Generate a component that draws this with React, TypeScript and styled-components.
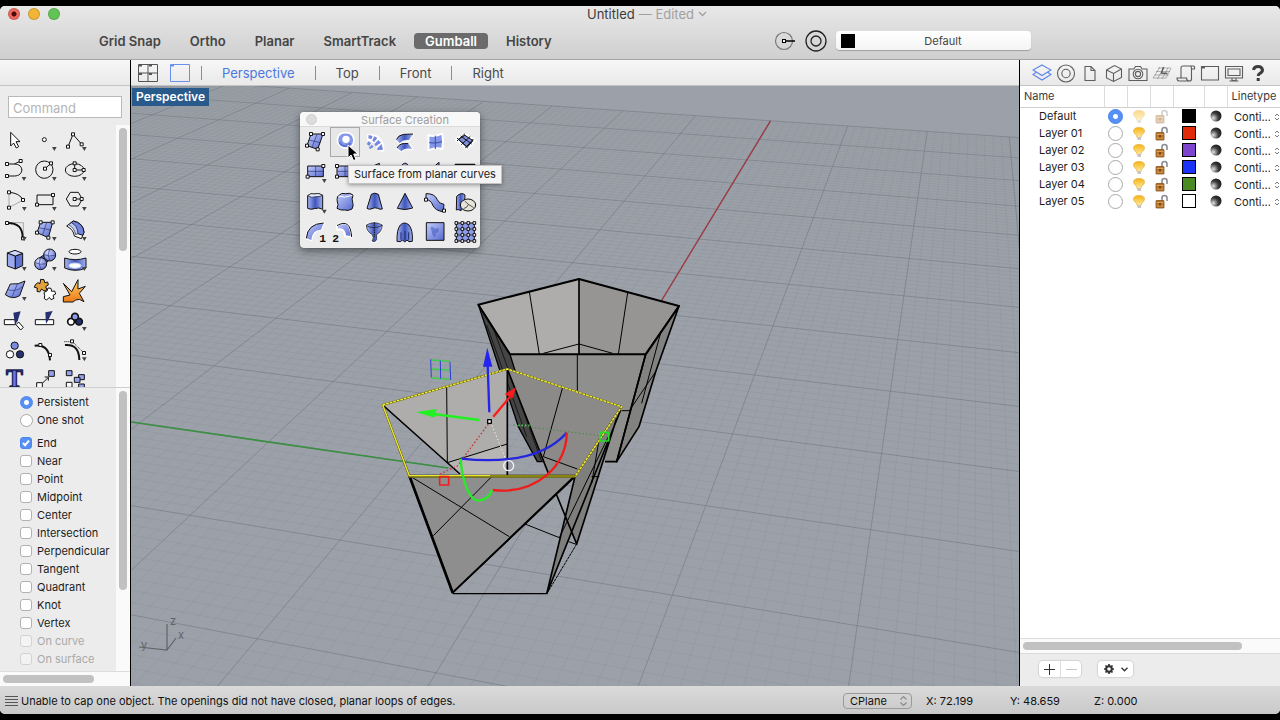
import React from "react";
import styled, { createGlobalStyle, css } from "styled-components";

const GlobalStyle = createGlobalStyle`
  *, *::before, *::after { box-sizing: border-box; }
  body { margin: 0; background: #000; }
  button, input, select { font: inherit; color: inherit; margin: 0; }
`;

/* ---------- window frame ---------- */

const Screen = styled.div`
  height: 100vh;
  padding: 6px 0;
  background: #000;
  font-family: Inter, "Liberation Sans", sans-serif;
  font-size: 11px;
  color: #1c1c1c;
`;

const Window = styled.div`
  height: 100%;
  display: flex;
  flex-direction: column;
  overflow: hidden;
  border-radius: 5px;
  background: #ececec;
`;

const Chrome = styled.header`
  flex: none;
  background: linear-gradient(#e8e8e8, #cfcfcf);
  border-bottom: 1px solid #a5a5a5;
`;

const TitleBar = styled.div`
  display: grid;
  grid-template-columns: 1fr auto 1fr;
  align-items: center;
  height: 16px;
  padding: 0 8px;
  font-size: 13px;
`;

const Lights = styled.div`
  display: flex;
  gap: 8px;
`;

const Light = styled.button<{ $color: string; $dot?: boolean }>`
  width: 12px;
  height: 12px;
  padding: 0;
  border: 1px solid rgba(0, 0, 0, 0.15);
  border-radius: 50%;
  background: ${(p) =>
    p.$dot ? `radial-gradient(circle, #4a0a08 0 2px, ${p.$color} 3px)` : p.$color};
`;

const Title = styled.h1`
  display: flex;
  align-items: center;
  gap: 4px;
  margin: 0 0 0 14px;
  font-size: 13px;
  line-height: 16px;
  font-weight: 400;
  color: #3c3c3c;
  span { color: #a0a0a0; }
`;

const Toolbar = styled.div`
  display: flex;
  align-items: center;
  height: 37px;
  padding: 0 249px 0 88px;
  gap: 7px;
`;

const Toggle = styled.button<{ $on?: boolean }>`
  height: 16px;
  padding: 0 11px;
  border: 0;
  border-radius: 4px;
  background: ${(p) => (p.$on ? "#6b6b6b" : "transparent")};
  color: ${(p) => (p.$on ? "#fff" : "#454545")};
  font-size: 13px;
  line-height: 16px;
  font-weight: 600;
`;

const LayerTools = styled.div`
  display: flex;
  align-items: center;
  gap: 8px;
  margin-left: auto;
`;

const PlainButton = styled.button`
  display: grid;
  place-items: center;
  width: 24px;
  height: 24px;
  padding: 0;
  border: 0;
  background: none;
  color: #4a4a4a;
`;

const LayerPopup = styled.button`
  display: flex;
  align-items: center;
  width: 195px;
  height: 19px;
  padding: 0 0 0 5px;
  border: 0;
  border-radius: 4px;
  background: linear-gradient(#fff, #f4f4f4);
  box-shadow: 0 1px 1px rgba(0, 0, 0, 0.25);
  color: #454545;
  span { flex: 1; }
`;

const Swatch = styled.i<{ $color: string }>`
  display: block;
  width: 14px;
  height: 14px;
  border: 1px solid #000;
  background: ${(p) => p.$color};
`;

const Workspace = styled.div`
  flex: 1;
  min-height: 0;
  display: flex;
`;

const stripStyle = css`
  flex: none;
  display: flex;
  align-items: center;
  height: 26px;
  background: linear-gradient(#f7f7f7, #e9e9e9);
  border-bottom: 1px solid #c4c4c4;
`;

/* ---------- left column ---------- */

const Sidebar = styled.aside`
  flex: none;
  width: 131px;
  display: flex;
  flex-direction: column;
  border-right: 1px solid #000;
`;

const SidebarStrip = styled.div`
  ${stripStyle}
`;

const CommandRow = styled.div`
  padding: 10px 8px 7px;
`;

const CommandInput = styled.input`
  display: block;
  width: 100%;
  height: 22px;
  padding: 2px 4px 0;
  border: 1px solid #b9b9b9;
  border-radius: 0;
  background: #fff;
  font-size: 13px;
  &::placeholder { color: #b4b4b4; opacity: 1; }
`;

const ScrollArea = styled.section<{ $grow?: boolean }>`
  display: flex;
  min-height: 0;
  overflow: hidden;
  ${(p) => (p.$grow ? "flex: 1;" : "flex: 0 0 263px; border-bottom: 1px solid #cfcfcf;")}
`;

const ScrollBody = styled.div`
  flex: 1;
  min-width: 0;
  overflow: hidden;
`;

const VTrack = styled.div`
  flex: none;
  width: 14px;
  padding: 3px;
  background: #fafafa;
`;

const VThumb = styled.div<{ $size: string }>`
  width: 8px;
  height: ${(p) => p.$size};
  border-radius: 4px;
  background: #c1c1c1;
`;

const HTrack = styled.div`
  flex: none;
  padding: 3px 3px;
  height: 15px;
  background: #fafafa;
  border-top: 1px solid #dcdcdc;
`;

const HThumb = styled.div<{ $size: string }>`
  width: ${(p) => p.$size};
  height: 8px;
  border-radius: 4px;
  background: #c1c1c1;
`;

const ToolGrid = styled.div`
  display: grid;
  grid-template-columns: repeat(3, 30px);
  grid-auto-rows: 30px;
  padding-top: 1px;
`;

const ToolButton = styled.button<{ $active?: boolean }>`
  display: block;
  padding: 0;
  border: 0;
  background: none;
  ${(p) => p.$active && "box-shadow: inset 0 0 0 1px #a9a9a9; background: #e6e6e6;"}
  svg { display: block; }
`;

const Options = styled.div`
  padding: 5px 0 0 20px;
`;

const OptionGroup = styled.div`
  margin-bottom: 5px;
`;

const Option = styled.label<{ $off?: boolean }>`
  display: flex;
  align-items: center;
  gap: 5px;
  height: 18px;
  white-space: nowrap;
  color: ${(p) => (p.$off ? "#a9a9a9" : "#1c1c1c")};
`;

const Radio = styled.input.attrs({ type: "radio" })<{ $large?: boolean }>`
  appearance: none;
  flex: none;
  width: ${(p) => (p.$large ? "15px" : "13px")};
  height: ${(p) => (p.$large ? "15px" : "13px")};
  border: 1px solid #a9a9a9;
  border-radius: 50%;
  background: #fff;
  &:checked {
    border-color: #4a86ee;
    background: radial-gradient(circle, #fff 0 2px, #568ff5 3px);
  }
`;

const OptionRadio = styled(Radio)`
  margin-right: -1px;
`;

const Check = styled.input.attrs({ type: "checkbox" })`
  appearance: none;
  flex: none;
  display: grid;
  place-items: center;
  width: 12px;
  height: 12px;
  border: 1px solid #b2b2b2;
  border-radius: 3px;
  background: #fff;
  &:disabled { border-color: #d2d2d2; background: #f3f3f3; }
  &:checked { border-color: #4a86ee; background: #568ff5; }
  &:checked::after {
    content: "";
    width: 4px;
    height: 7px;
    margin-bottom: 2px;
    border: solid #fff;
    border-width: 0 2px 2px 0;
    transform: rotate(42deg);
  }
`;

/* ---------- centre ---------- */

const Center = styled.main`
  flex: 1;
  min-width: 0;
  display: flex;
  flex-direction: column;
`;

const ViewTabs = styled.nav`
  ${stripStyle}
  padding-left: 4px;
`;

const ViewIcon = styled(PlainButton)`
  width: 26px;
  margin-right: 6px;
`;

const TabList = styled.div`
  display: flex;
  padding-left: 2px;
`;

const Tab = styled.button<{ $on?: boolean }>`
  height: 14px;
  padding: 0 20px;
  border: 0;
  border-left: 1px solid #8d8d8d;
  background: none;
  font-size: 13px;
  line-height: 14px;
  color: ${(p) => (p.$on ? "#4a78e0" : "#4b4b4b")};
`;

const Viewport = styled.div`
  position: relative;
  flex: 1;
  min-height: 0;
  overflow: hidden;
  background: #9ca1a9;
`;

const Scene = styled.svg`
  display: block;
  width: 100%;
  height: 100%;
`;

const ViewLabel = styled.button`
  position: absolute;
  left: 1px;
  top: 2px;
  height: 18px;
  padding: 0 4px;
  border: 0;
  background: #285a8c;
  color: #fff;
  font-size: 12px;
  line-height: 18px;
  font-weight: 600;
`;

const Palette = styled.section`
  position: absolute;
  left: 169px;
  top: 26px;
  width: 180px;
  border-radius: 4px;
  background: #ececec;
  box-shadow: 0 3px 9px rgba(0, 0, 0, 0.45), 0 0 1px rgba(0, 0, 0, 0.5);
`;

const PaletteTitle = styled.header`
  position: relative;
  height: 15px;
  padding-left: 30px;
  border-bottom: 1px solid #dadada;
  border-radius: 4px 4px 0 0;
  background: #f8f8f8;
  color: #9c9c9c;
  text-align: center;
  line-height: 17px;
`;

const PaletteClose = styled.button`
  position: absolute;
  left: 6px;
  top: 2px;
  width: 11px;
  height: 11px;
  padding: 0;
  border: 1px solid #cfcfcf;
  border-radius: 50%;
  background: #dcdcdc;
`;

const PaletteGrid = styled.div`
  display: grid;
  grid-template-columns: repeat(6, 30px);
  grid-auto-rows: 30px;
  padding-bottom: 1px;
`;

const Tooltip = styled.div`
  position: absolute;
  left: 217px;
  top: 79px;
  padding: 0 5px;
  border: 1px solid #c2c2c2;
  background: #f4f4f4;
  box-shadow: 0 1px 4px rgba(0, 0, 0, 0.4);
  line-height: 17px;
  white-space: nowrap;
`;

const Pointer = styled.svg`
  position: absolute;
  left: 216px;
  top: 58px;
`;

/* ---------- right column ---------- */

const Inspector = styled.aside`
  flex: none;
  width: 261px;
  display: flex;
  flex-direction: column;
  overflow: hidden;
  border-left: 1px solid #000;
  background: #fff;
`;

const PanelIcons = styled.div`
  ${stripStyle}
  padding-left: 10px;
`;

const PanelIcon = styled(PlainButton)<{ $on?: boolean }>`
  color: ${(p) => (p.$on ? "#5c86ea" : "#5d5d5d")};
`;

const LayerTable = styled.table`
  width: 100%;
  table-layout: fixed;
  border-collapse: collapse;
  th {
    height: 21px;
    padding: 0 0 0 4px;
    border-right: 1px solid #dcdcdc;
    border-bottom: 1px solid #d0d0d0;
    font-weight: 400;
    text-align: left;
    color: #3a3a3a;
  }
  th:last-child { border-right: 0; }
  td {
    height: 17px;
    padding: 0;
    line-height: 15px;
    white-space: nowrap;
  }
  td:first-child { padding-left: 19px; }
`;

const Cell = styled.div`
  display: flex;
  justify-content: center;
  align-items: center;
  height: 17px;
`;

const LineCell = styled(Cell)`
  justify-content: flex-start;
  padding: 2px 0 0 7px;
  gap: 4px;
`;

const LineSelect = styled.select`
  appearance: none;
  width: 36px;
  padding: 0;
  border: 0;
  background: none;
  line-height: 15px;
`;

const Filler = styled.div`
  flex: 1;
`;

const PanelFooter = styled.footer`
  flex: none;
  display: flex;
  align-items: flex-start;
  gap: 17px;
  height: 33px;
  padding: 7px 19px;
  background: #ececec;
  border-top: 1px solid #dadada;
`;

const Segments = styled.div`
  display: flex;
  height: 16px;
  border-radius: 4px;
  background: #fff;
  box-shadow: 0 0 1px 1px #d4d4d4;
`;

const Segment = styled.button<{ $dim?: boolean; $wide?: boolean }>`
  display: flex;
  align-items: center;
  justify-content: center;
  gap: 6px;
  width: ${(p) => (p.$wide ? "35px" : "21px")};
  padding: 0;
  border: 0;
  background: none;
  color: ${(p) => (p.$dim ? "#c6c6c6" : "#333")};
  & + & { border-left: 1px solid #dcdcdc; }
`;

/* ---------- status bar ---------- */

const StatusBar = styled.footer`
  flex: none;
  display: flex;
  align-items: center;
  height: 28px;
  padding: 2px 0 0 5px;
  gap: 3px;
  background: linear-gradient(#dadada, #c9c9c9);
  color: #111;
`;

const Coords = styled.div`
  display: flex;
  align-items: center;
  margin-left: auto;
`;

const PlaneBox = styled.div`
  position: relative;
  display: flex;
  align-items: center;
  margin-right: 14px;
  svg { position: absolute; right: 4px; }
`;

const PlaneSelect = styled.select`
  appearance: none;
  width: 69px;
  height: 16px;
  padding: 0 6px;
  border: 1px solid #9a9a9a;
  border-radius: 4px;
  background: transparent;
  line-height: 14px;
`;

const Coord = styled.output<{ $last?: boolean }>`
  width: ${(p) => (p.$last ? "186px" : "84px")};
`;

/* ---------- shared drawing parts ---------- */

const K = "#111";

const Nodes = ({ at, s = 9 }: { at: number[][]; s?: number }) => (
  <>
    {at.map(([x, y], i) => (
      <rect key={i} x={x - s / 2} y={y - s / 2} width={s} height={s} fill="#fff" stroke={K} strokeWidth={3} />
    ))}
  </>
);

const Flag = ({ x, y }: { x: number; y: number }) => (
  <path d={`M${x - 7} ${y - 6}h14l-7 12z`} fill="#444" stroke="none" />
);

const UpDown = ({ color = "#555" }: { color?: string }) => (
  <svg width="9" height="12" viewBox="0 0 9 12" fill="none" stroke={color} strokeWidth="1.2" aria-hidden>
    <path d="M1.500 4.500l3-3 3 3M1.500 7.500l3 3 3-3" />
  </svg>
);

const Gradients = () => (
  <svg width="0" height="0" style={{ position: "absolute" }} aria-hidden>
    <defs>
      <linearGradient id="blue" x1="0" y1="0" x2="1" y2="1">
        <stop offset="0" stopColor="#c3cdfb" />
        <stop offset="1" stopColor="#5568cf" />
      </linearGradient>
      <linearGradient id="steel" x1="0" y1="0" x2="1" y2="0">
        <stop offset="0" stopColor="#a9b6f2" />
        <stop offset="0.5" stopColor="#3e55bb" />
        <stop offset="1" stopColor="#a4b1ee" />
      </linearGradient>
      <radialGradient id="ball" cx="0.35" cy="0.3" r="0.8">
        <stop offset="0" stopColor="#d4dbff" />
        <stop offset="1" stopColor="#5769c8" />
      </radialGradient>
      <linearGradient id="fire" x1="0" y1="0" x2="0" y2="1">
        <stop offset="0" stopColor="#fbd060" />
        <stop offset="1" stopColor="#ee7b1c" />
      </linearGradient>
      <linearGradient id="bulb" x1="0" y1="0" x2="0" y2="1">
        <stop offset="0" stopColor="#f9b414" />
        <stop offset="1" stopColor="#fbe9a0" />
      </linearGradient>
      <radialGradient id="material" cx="0.25" cy="0.7" r="0.8">
        <stop offset="0" stopColor="#e2e2e2" />
        <stop offset="0.6" stopColor="#3a3a3a" />
        <stop offset="1" stopColor="#1c1c1c" />
      </radialGradient>
    </defs>
  </svg>
);

/* Icons of both tool palettes are drawn on shared sheets, 90 units per cell. */

const mainTools: [string, React.ReactNode][] = [
  ["Select", <path d="M32 22v41l9-9 8 15 7-4-8-15h12z" fill="#fff" stroke={K} />],
  ["Point", <><circle cx="133" cy="44" r="6" fill="#fff" /><Flag x={163} y={72} /></>],
  ["Polyline", <><path d="M204 65l15-37 26 30" /><Nodes at={[[204, 65], [219, 28], [245, 58]]} /><Flag x={253} y={72} /></>],
  ["Arc", <><path d="M21 117h22c30 0 30 36 0 36H21M43 117l19-9" /><Nodes at={[[21, 117], [21, 153], [62, 108]]} /><Flag x={72} y={162} /></>],
  ["Circle", <><circle cx="133" cy="134" r="26" /><path d="M135 131l18-16" /><Nodes at={[[135, 131], [153, 115]]} /><Flag x={163} y={162} /></>],
  ["Ellipse", <><ellipse cx="224" cy="135" rx="28" ry="19" /><path d="M224 115v20h27" /><Nodes at={[[224, 115], [224, 135], [251, 135]]} /><Flag x={253} y={162} /></>],
  ["Sector", <><path d="M27 202q32 2 42 23" /><path d="M27 202v46l42-23" stroke="#888" strokeWidth="2" /><Nodes at={[[27, 202], [27, 248], [69, 225]]} /><Flag x={73} y={252} /></>],
  ["Rectangle", <><path d="M111 210h48v29h-48z" /><Nodes at={[[159, 210], [111, 239]]} /><Flag x={163} y={252} /></>],
  ["Polygon", <><path d="M199 222l12-20h24l12 20-12 21h-24z" /><path d="M224 222h21" /><Nodes at={[[224, 222], [245, 222]]} /><Flag x={253} y={252} /></>],
  ["Fillet", <><path d="M21 293h49v48" stroke="#888" strokeWidth="2" /><path d="M21 294c34 0 47 14 47 46" strokeWidth="6" /><Nodes at={[[21, 294], [69, 340]]} /><Flag x={73} y={342} /></>],
  ["Surface", <><path d="M122 292h36l-13 46-34-15z" fill="url(#blue)" /><path d="M140 293l-12 36M116 308l36 7" stroke="#27306f" strokeWidth="2" /><Nodes at={[[122, 292], [158, 292], [145, 338], [111, 323]]} /><Flag x={163} y={342} /></>],
  ["Sweep", <><path d="M200 303l20-15q30 6 32 34l-8 19-21-8q-2-19-23-30z" fill="#fff" /><path d="M212 294l8-6q30 6 32 34l-4 9-20-7q-2-20-16-30z" fill="#6f83df" /><path d="M206 299l8-6q18 8 20 33l-7 3q-4-20-21-30z" fill="#c3cdfb" strokeWidth="2" /><Flag x={253} y={342} /></>],
  ["Box", <><path d="M22 384l24 9v39l-24-9z" fill="#9aa8ee" /><path d="M46 393l22-8v37l-22 10z" fill="#5f72cf" /><path d="M22 384l23-8 23 9-22 8z" fill="#cdd6fd" /><Flag x={73} y={432} /></>],
  ["Spheres", <><path d="M130 391l14 18-10 8-16-18z" fill="#5769c8" /><circle cx="149" cy="390" r="18" fill="url(#ball)" /><circle cx="122" cy="416" r="18" fill="url(#ball)" /><path d="M132 389q14 7 34 2M149 373q-9 16 0 34M105 413q16 8 34 3M121 399q-8 16 2 34" strokeWidth="2" stroke="#2a3785" /><Flag x={163} y={432} /></>],
  ["Tube", <><ellipse cx="225" cy="380" rx="18" ry="7" fill="#fff" /><path d="M194 399q31 10 64 0v30q-32 14-64 0z" fill="url(#steel)" /><ellipse cx="225" cy="422" rx="18" ry="8" fill="#fff" stroke="#c4cefa" /><Flag x={253} y={432} /></>],
  ["Patch", <><path d="M31 477q25 3 44-9l-16 44q-22 13-43-3z" fill="url(#blue)" /><path d="M52 477l-16 39M23 494q26 8 44-9" stroke="#2a3785" strokeWidth="2" /><Flag x={73} y={522} /></>],
  ["Join", <><path d="M106 479l8-6 6 3 2-13 10 1 2 9 9-2 2 9-8 5 4 9-9 4-7-6-6 9-8-2 1-10-9-2z" fill="#e2a13a" /><path d="M132 502l9-4 3-9 9 1 2 9 9-1 3 9-8 4 3 9-9 4-5-7-8 8-7-4 1-9z" fill="#fff" /></>],
  ["Explode", <path d="M190 475l25 25 19-36v28l22-8-18 21 14 25q-14-11-26-5l-6 6h-30v-16l20-5z" fill="url(#fire)" />],
  ["Trim", <><path d="M13 584h33v15H13z" fill="#fff" /><path d="M40 563l22-4-9 29-8 10z" fill="#27306f" stroke="none" /><path d="M48 599l8-8 14 16-8 8z" fill="#fff" /></>],
  ["Split", <><path d="M106 584h55v15h-55z" fill="#fff" /><path d="M136 562l22-4-13 27-7 12z" fill="#27306f" stroke="none" /></>],
  ["Boolean", <><circle cx="213" cy="590" r="10" fill="#fff" strokeWidth="5" /><circle cx="237" cy="590" r="10" fill="#27306f" strokeWidth="5" /><circle cx="225" cy="575" r="10" fill="#8d9bea" strokeWidth="5" /><Flag x={253} y={612} /></>],
  ["Group", <><circle cx="44" cy="662" r="11" fill="#7b8be2" /><circle cx="30" cy="688" r="11" fill="#fff" /><circle cx="60" cy="688" r="11" fill="#27306f" /></>],
  ["Edit points", <><path d="M104 662q42-6 46 44" strokeWidth="6" /><Nodes at={[[121, 660], [150, 690]]} /></>],
  ["Control points", <><path d="M195 660q42-4 43 45" strokeWidth="6" /><path d="M193 650h24l36 35" strokeDasharray="3 3" /><Nodes at={[[216, 649], [252, 684]]} /><Flag x={253} y={703} /></>],
  ["Text", <text x="18" y="787" fontFamily="Liberation Serif" fontWeight="700" fontSize="76" fill="#6a7dde" stroke="#1c2455" strokeWidth="4">T</text>],
  ["Move", <><path d="M128 774l16-16M134 756h11v11" /><rect x="146" y="737" width="17" height="17" fill="#95a3ef" /><rect x="110" y="773" width="17" height="17" fill="#fff" /></>],
  ["Array", <><rect x="199" y="737" width="17" height="15" fill="#95a3ef" /><rect x="236" y="749" width="17" height="15" fill="#95a3ef" /><rect x="223" y="757" width="17" height="15" fill="#95a3ef" /><rect x="199" y="772" width="17" height="15" fill="#fff" /><rect x="236" y="777" width="17" height="15" fill="#95a3ef" /></>],
];

const gridNodes: number[][] = [];
for (let i = 0; i < 4; i++) for (let j = 0; j < 4; j++) gridNodes.push([484 + i * 18, 354 + j * 18]);

const REVOLVE = "M214 360q24-14 48 0-2 22-17 28v16q-5 10-14 4 8-9 0-20-17-8-17-28z";

const surfaceTools: [string, React.ReactNode][] = [
  ["Surface from corner points", <><path d="M48 87h36l-16 46-32-11z" fill="url(#blue)" /><path d="M66 88l-15 39M42 105l34 8" stroke="#27306f" strokeWidth="2" /><Nodes at={[[48, 87], [84, 87], [68, 133], [36, 122]]} /></>],
  ["Surface from planar curves", <><path d="M151 83c32 0 31 34 13 44-19 8-40-6-36-28 3-11 12-16 23-16z" fill="#8497e8" stroke="#fff" strokeWidth="5" /><path d="M134 112c4 14 26 14 32 2" stroke="#5c72d2" strokeWidth="6" /><circle cx="153" cy="103" r="11" fill="#fff" stroke="none" /></>],
  ["Loft", <><path d="M220 92q44-4 44 44l-14-2q0-26-30-30z" fill="#fff" stroke="#fff" strokeWidth="8" /><path d="M221 90l12 3-4 10-9-3zM238 94l9 5-10 13-5-6zM250 105l8 8-16 11-4-7zM260 117l4 17-17 2v-7zM221 109l7 5-5 9-8-6zM231 119l5 6-10 7-5-4z" fill="#7389de" stroke="none" /></>],
  ["Sweep one rail", <><path d="M304 104l18-16 32-1-12 18q-20-1-28 10zM306 130q8-18 34-14l12 16q-24-5-32 7z" fill="#7f92e6" stroke="#fff" strokeWidth="6" /><path d="M304 104q6-14 22-16l28-1-12 18q-20-1-28 10z" fill="url(#steel)" stroke="none" /><path d="M306 130q8-18 34-14l12 16q-24-5-32 7z" fill="url(#steel)" stroke="none" /><path d="M304 104q6-14 22-16l28-1M306 129q8-17 34-13" strokeWidth="3" /></>],
  ["Patch", <><path d="M400 90q18 7 42-4 4 22 0 46-20-6-42 4 2-20 0-46z" fill="#8497e8" stroke="#fff" strokeWidth="6" /><path d="M421 92v40M402 113q20 4 39-3" stroke="#3b4fa8" strokeWidth="3" /></>],
  ["Network surface", <><path d="M486 104l24-15 26 17-19 22z" stroke="#fff" strokeWidth="12" fill="#fff" /><path d="M490 103l20-12 24 16-17 19z" fill="#7f90de" /><path d="M486 99l32 30M497 93l33 24M486 108l24-22M499 119l27-25M511 129l24-27" strokeWidth="3" /></>],
  ["Rectangular plane", <><path d="M38 183h47v32H38z" fill="url(#blue)" /><path d="M62 184v30M39 199h45" stroke="#27306f" strokeWidth="2" /><Nodes at={[[85, 183], [38, 215]]} /><Flag x={88} y={228} /></>],
  ["Plane by three points", <><path d="M126 183h46v32h-46z" fill="url(#blue)" /><path d="M150 184v30M127 199h45" stroke="#27306f" strokeWidth="2" /><Nodes at={[[126, 183], [126, 215]]} /></>],
  ["Vertical plane", <path d="M232 184l21-9v30h-21z" fill="url(#blue)" />],
  ["Cutting plane", <path d="M320 185q2-12 14-10l9 10z" fill="url(#blue)" />],
  ["Plane through points", <path d="M418 184l14-12v20z" fill="url(#blue)" />],
  ["Picture frame", <path d="M481 178h58v30h-58z" fill="url(#blue)" strokeWidth="4" />],
  ["Extrude curve", <><path d="M38 272v38q9 5 20 1 14-5 25 2v-42q-12-9-25-4-10-4-20 5z" fill="url(#steel)" /><path d="M38 272q10-9 20-5 13-5 25 4-10 5-22 4-10 5-23-3z" fill="#e6ebff" strokeWidth="2" /><Flag x={88} y={320} /></>],
  ["Extrude along curve", <><path d="M128 274q12-13 24-8 13-4 22 4-5 14-1 22 4 10-2 20-12 7-22 3-12 2-23-5 6-13 1-19-2-8 1-17z" fill="url(#blue)" /><path d="M130 273q18 8 42-2" stroke="#fff" strokeWidth="3" /></>],
  ["Extrude tapered", <><path d="M229 268q10-7 21 0l12 44q-8 2-14-2-9-4-17 1-8 4-15-1z" fill="url(#steel)" /></>],
  ["Extrude to point", <path d="M330 265l23 44q-22 9-46 1z" fill="url(#steel)" />],
  ["Ribbon", <><path d="M393 266q26-1 34 18 4 12 20 14l-2 22q-24-2-32-20-5-15-20-16z" fill="url(#blue)" /><Nodes at={[[393, 284], [447, 317]]} /></>],
  ["Fillet surface", <><path d="M485 274q14-14 25-4l-2 34-10 13q-10-6-14-2z" fill="url(#steel)" /><ellipse cx="519" cy="300" rx="23" ry="18" fill="#e6e3da" /><path d="M506 311q13-4 14-13l16 10M520 298l-11-10" strokeWidth="2" /></>],
  ["Rail revolve one", <><path d="M86 354l-8 20q-26 0-29 31l-15-5q3-44 52-46z" fill="url(#blue)" stroke="#fff" strokeWidth="7" /><path d="M86 354l-8 20q-26 0-29 31l-15-5q3-44 52-46z" fill="url(#blue)" stroke="none" /><path d="M34 400q3-44 52-46" /><text x="73" y="411" fontSize="34" fontFamily="Liberation Mono" fontWeight="700" fill={K} stroke="none">1</text></>],
  ["Rail revolve two", <><path d="M126 362q40-24 44 34l-20-2q-1-26-24-20z" fill="url(#blue)" stroke="#fff" strokeWidth="6" /><path d="M126 362q40-24 44 34" /><text x="112" y="411" fontSize="34" fontFamily="Liberation Mono" fontWeight="700" fill={K} stroke="none">2</text></>],
  ["Revolve", <><path d={REVOLVE} stroke="#fff" strokeWidth="7" /><path d={REVOLVE} fill="url(#steel)" strokeWidth="2" /><path d="M214 362q22 12 48-1" strokeWidth="2" /><path d="M238 352v44" strokeDasharray="4 3" /></>],
  ["Drape", <><path d="M306 409q-1-36 10-49 12-12 26 0 12 15 10 49l-10 1-6-5-7 6-6-6-7 5z" fill="url(#steel)" /><path d="M318 404v-22M330 404v-26M341 404v-22" stroke="#1d2a70" /></>],
  ["Heightfield", <><rect x="394" y="353" width="53" height="53" fill="url(#blue)" /><path d="M407 368q4-6 9 0t14 0q4 16-8 16v10q-8 4-9-4z" fill="#3c53b8" stroke="none" opacity="0.5" /></>],
  ["Surface from point grid", <><rect x="484" y="354" width="54" height="54" fill="#8d9cea" /><path d="M502 354v54M520 354v54M484 372h54M484 390h54" strokeWidth="2" /><Nodes at={gridNodes} s={8} /></>],
];

const SheetIcon = ({ x, y, children }: { x: number; y: number; children: React.ReactNode }) => (
  <svg width="30" height="30" viewBox={`${x} ${y} 90 90`} fill="none" stroke={K} strokeWidth="3" strokeLinejoin="round">
    {children}
  </svg>
);

/* ---------- viewport drawing ---------- */

/* Ground plane in perspective: both axis directions meet the horizon line. */
const ORIGIN = [551, 483];
const VANISH_X = [977, -220];
const VANISH_Y = [-4254, -220];
const STEP_X = 0.1063;
const STEP_Y = 0.0312;
const EXTENT = 10;

const project = (u: number, v: number) => {
  const a = u * STEP_X;
  const b = v * STEP_Y;
  const w = 1 + a + b;
  return [0, 1].map((i) => ((ORIGIN[i] + a * VANISH_X[i] + b * VANISH_Y[i]) / w).toFixed(1)).join(" ");
};

const gridPath = (values: number[]) =>
  values
    .map((k) => {
      const u0 = Math.max(-EXTENT, (-0.4 - k * STEP_Y) / STEP_X);
      const v0 = Math.max(-EXTENT, (-0.4 - k * STEP_X) / STEP_Y);
      const across = `M${project(u0, k)}L${project(EXTENT, k)}`;
      const along = v0 < EXTENT ? `M${project(k, v0)}L${project(k, EXTENT)}` : "";
      return across + along;
    })
    .join("");

const majors: number[] = [];
const minors: number[] = [];
for (let i = -100; i <= 100; i++) (i % 10 === 0 ? majors : minors).push(i / 10);

const Ground = () => (
  <g fill="none">
    <path d={gridPath(minors)} stroke="#838890" strokeWidth="1" opacity="0.24" />
    <path d={gridPath(majors)} stroke="#6f747c" strokeWidth="1" opacity="0.55" />
    <path d={`M${project(0, 0)}L${project(EXTENT, 0)}`} stroke="#9c3b44" strokeWidth="1.4" />
    <path d="M131 422L448 468" stroke="#3a8f42" strokeWidth="1.6" />
  </g>
);

const Model = () => (
  <g transform="translate(370 270) scale(0.33333)" stroke="#000" strokeWidth="5" strokeLinejoin="round" fill="none">
    {/* rear cup */}
    <path d="M420 253H827L740 575H505z" fill="#8f8f8e" stroke="none" />
    <path d="M325 104L627 27V253H420z" fill="#aeadab" stroke="none" />
    <path d="M627 27L927 108 827 253H627z" fill="#969593" stroke="none" />
    <path d="M325 104L420 253 520 575H502L445 470z" fill="#454545" strokeWidth="4" />
    <path d="M372 180L515 575M350 165L470 500" strokeWidth="2" />
    <path d="M927 108L827 253 740 575 807 470 857 305z" fill="#828281" />
    <path d="M325 104L627 27 927 108 827 253H420z" strokeWidth="6" />
    <path d="M627 27V253M827 253L740 575H705" />
    <path d="M478 65L508 253M773 68L745 253M520 250L627 222 728 250M622 253V362M857 305L778 422H755M872 188L815 400" strokeWidth="3" />
    {/* front cup */}
    <path d="M38 405L412 297V617H270z" fill="#aeadab" stroke="none" />
    <path d="M235 578L412 522V617H270z" fill="#b7b6b5" stroke="none" />
    <path d="M412 297L755 410 615 620H536z" fill="#8b8a88" stroke="none" />
    <path d="M118 617H615L248 968z" fill="#8e8e8e" />
    <path d="M615 620L755 410 722 498 620 822 604 790 530 972z" fill="#7e7e7c" stroke="none" />
    <path d="M412 297V617M412 297L536 612M38 405L270 612" />
    <path d="M118 617L248 968" strokeWidth="8" />
    <path d="M38 405L118 617M248 968L615 620 530 972M752 420L530 972M740 445L620 822M560 675L620 822" />
    <path d="M248 971H530" strokeWidth="4" />
    <path d="M620 822L530 972" strokeWidth="3" strokeDasharray="9 2" />
    <path d="M230 350L232 578L412 522M578 352L520 560L622 597M118 617L418 800M365 620L190 797M465 762L568 803M688 505L665 640M715 500L568 803M665 620H688M596 815L622 824" strokeWidth="3" />
    <path d="M38 405L412 297 755 410 615 620H118z" stroke="#6c6a10" strokeWidth="6" />
    <path d="M38 405L412 297 755 410 615 620" stroke="#f4ee3a" strokeWidth="4" strokeDasharray="8 3" />
    <path d="M38 405L118 617H360" stroke="#ece62c" strokeWidth="4" />
    <path d="M360 618H615" stroke="#8a8410" strokeWidth="6" />
    {/* transform handles */}
    <path d="M355 462L262 588 210 612" stroke="#c23a3a" strokeWidth="4" strokeDasharray="5 6" />
    <path d="M366 466L408 570" stroke="#f2f2f2" strokeWidth="3" strokeDasharray="4 7" />
    <path d="M430 465L690 497" stroke="#3c8d3c" strokeWidth="3" strokeDasharray="4 7" />
    <path d="M445 466H482" stroke="#4ad04a" strokeDasharray="4 6" />
    <path d="M183 270L241 274M183 297L241 300M183 324L241 328" stroke="#38cf4a" strokeWidth="4" />
    <path d="M182 268L184 322M211 272L212 326M240 276L242 330" stroke="#2b3fd6" strokeWidth="3" />
    <path d="M272 566Q500 590 590 488" stroke="#2525e0" strokeWidth="7" />
    <path d="M590 488C592 585 500 676 368 660" stroke="#f01c1c" strokeWidth="7" />
    <path d="M272 566C276 640 302 692 325 692 345 690 358 682 366 660" stroke="#28ea28" strokeWidth="7" />
    <path d="M358 427L353 285" stroke="#2525f0" strokeWidth="7" />
    <path d="M352 233L339 290H367z" fill="#2525f0" stroke="none" />
    <path d="M370 440L420 380" stroke="#fa1c1c" strokeWidth="7" />
    <path d="M438 352L404 372 428 385z" fill="#fa1c1c" stroke="none" />
    <path d="M328 450L190 432" stroke="#22f022" strokeWidth="7" />
    <path d="M138 426L200 417 193 443z" fill="#22f022" stroke="none" />
    <rect x="353" y="449" width="11" height="11" fill="#fff" strokeWidth="4" />
    <rect x="209" y="620" width="27" height="25" stroke="#f01c1c" strokeWidth="5" />
    <rect x="690" y="487" width="26" height="26" stroke="#22e022" strokeWidth="5" />
    <circle cx="416" cy="587" r="15" stroke="#f4f4f4" strokeWidth="4" />
  </g>
);

const Triad = () => (
  <g fontFamily="Inter" fontSize="11" fill="#5f646b">
    <path d="M167 624V650L139 647M167 650L176 638" fill="none" stroke="#5f646b" strokeWidth="1.2" />
    <text x="170" y="625">z</text>
    <text x="178" y="639">x</text>
    <text x="141" y="649">y</text>
  </g>
);

/* ---------- panel icons ---------- */

const Line = ({ size = 20, children, w = 1.1 }: { size?: number; w?: number; children: React.ReactNode }) => (
  <svg width={size} height={size} viewBox="0 0 20 20" fill="none" stroke="currentColor" strokeWidth={w} aria-hidden>
    {children}
  </svg>
);

const panelIcons: [string, React.ReactNode][] = [
  ["Layers", <path d="M10 2l9 5-9 5.500-9-5.500zM4 9.500l-3 2 9 5.500 9-5.500-3-2" />],
  ["Properties", <><circle cx="10" cy="10.500" r="8.500" /><circle cx="10" cy="10.500" r="4.200" /></>],
  ["Page", <path d="M5 3.500h6l4 4v10H5zM11 3.500v4h4" />],
  ["Box", <path d="M2.500 7l8-4.500 7 3.500v8.500l-8 4-7-3.500zM2.500 7l7 3.500L17.500 6M9.500 10.500v8" />],
  ["Camera", <><path d="M1 6h5l1.500-2.500h5L14 6h5v11.500H1z" /><circle cx="10" cy="11" r="4.800" /><circle cx="10" cy="11" r="2.600" /></>],
  ["Grid", <g strokeWidth="0.8"><path d="M6 5h13M4 8.500h14M2.500 12h14M1 15h13M8 4L1 15M12 4L5.500 16M16 5l-6 11M19 5.500L14 15" opacity="0.55" /><path d="M11.500 4l-2 6 6 .5" strokeWidth="1.500" /></g>],
  ["Notes", <path d="M5 14.500V5q0-2 2-2h10.500q1.500 0 1 3h-3v10q0 2-2 2H3q-2 0-2-3h9.500q0 3 3 3M14 3q1.500 0 1.500 3" />],
  ["Panel", <><path d="M1.500 3.500h17v13.500h-17z" /><path d="M2 4.500h3" strokeWidth="2" /></>],
  ["Display", <><path d="M1.500 3.500h17v11.500h-17zM4 6h12v6.500H4zM8 15v2.500h4V15M5.500 18h9" /></>],
];

const Help = () => (
  <svg width="20" height="20" viewBox="0 0 20 20" fill="none" stroke="#3d3d3d" aria-hidden>
    <path d="M5.500 7q.5-3.500 4.500-3.500T14.500 7q0 2-2.500 3.300-1.800 1-1.800 2.700" strokeWidth="3" />
    <path d="M10.200 15v3" strokeWidth="3" />
  </svg>
);

const Bulb = ({ dim }: { dim?: boolean }) => (
  <svg width="14" height="15" viewBox="0 0 14 15" opacity={dim ? 0.5 : 1} aria-hidden>
    <path d="M7 1.500q5.500 0 5.500 3.700 0 2-3 4.300l-.5 2H5l-.5-2Q1.500 7.200 1.500 5.200 1.500 1.500 7 1.500z" fill="url(#bulb)" stroke="#dfa42c" strokeWidth="0.600" />
    <path d="M5.500 11h3.500v3H5.500z" fill="#c9c6c0" />
  </svg>
);

const Lock = ({ dim }: { dim?: boolean }) => (
  <svg width="15" height="15" viewBox="0 0 15 15" opacity={dim ? 0.4 : 1} aria-hidden>
    <path d="M8 7.500V4Q8 1.500 10.500 1.500T13 4v3" fill="none" stroke="#8a8d94" strokeWidth="1.600" />
    <rect x="2" y="6.500" width="8" height="7.500" rx="0.500" fill="#b9752b" stroke="#80501a" strokeWidth="0.800" />
    <path d="M2.500 8.500h7M2.500 12h7" stroke="#e0a860" strokeWidth="0.800" />
    <path d="M6 9v2.500" stroke="#4a2d0c" strokeWidth="1.200" />
  </svg>
);

const layers = [
  { name: "Default", color: "#000" },
  { name: "Layer 01", color: "#e22a08" },
  { name: "Layer 02", color: "#7d45cf" },
  { name: "Layer 03", color: "#1b32fb" },
  { name: "Layer 04", color: "#4a8a22" },
  { name: "Layer 05", color: "#fff" },
];

const snaps = [
  "End", "Near", "Point", "Midpoint", "Center", "Intersection", "Perpendicular",
  "Tangent", "Quadrant", "Knot", "Vertex", "On curve", "On surface",
];

export default function App() {
  return (
    <Screen>
      <GlobalStyle />
      <Gradients />
      <Window>
        <Chrome>
          <TitleBar>
            <Lights>
              <Light $color="#ed6a5f" $dot aria-label="Close" />
              <Light $color="#f0b537" aria-label="Minimize" />
              <Light $color="#62c454" aria-label="Zoom" />
            </Lights>
            <Title>
              Untitled <span>— Edited</span>
              <svg width="9" height="6" viewBox="0 0 9 6" fill="none" stroke="#a0a0a0" strokeWidth="1.300" aria-hidden>
                <path d="M1 1l3.500 3.500L8 1" />
              </svg>
            </Title>
          </TitleBar>
          <Toolbar>
            {["Grid Snap", "Ortho", "Planar", "SmartTrack", "Gumball", "History"].map((t) => (
              <Toggle key={t} $on={t === "Gumball"}>{t}</Toggle>
            ))}
            <LayerTools>
              <PlainButton aria-label="Radius">
                <svg width="22" height="20" viewBox="0 0 22 20" fill="none" stroke="#777" aria-hidden>
                  <circle cx="11" cy="10" r="8.500" strokeWidth="1.200" />
                  <path d="M12 10h10" stroke="#000" strokeWidth="1.300" />
                  <rect x="9.500" y="8.500" width="3" height="3" fill="#fff" stroke="#000" />
                </svg>
              </PlainButton>
              <PlainButton aria-label="Record history">
                <svg width="22" height="22" viewBox="0 0 22 22" fill="none" stroke="#222" strokeWidth="1.300" aria-hidden>
                  <circle cx="11" cy="11" r="10" />
                  <circle cx="11" cy="11" r="5" />
                </svg>
              </PlainButton>
              <LayerPopup>
                <Swatch $color="#000" />
                <span>Default</span>
              </LayerPopup>
            </LayerTools>
          </Toolbar>
        </Chrome>

        <Workspace>
          <Sidebar>
            <SidebarStrip />
            <CommandRow>
              <CommandInput placeholder="Command" aria-label="Command" />
            </CommandRow>
            <ScrollArea>
              <ScrollBody>
                <ToolGrid>
                  {mainTools.map(([name, art], i) => (
                    <ToolButton key={name} aria-label={name}>
                      <SheetIcon x={(i % 3) * 90} y={3 + Math.floor(i / 3) * 90}>{art}</SheetIcon>
                    </ToolButton>
                  ))}
                </ToolGrid>
              </ScrollBody>
              <VTrack><VThumb $size="123px" /></VTrack>
            </ScrollArea>
            <ScrollArea $grow>
              <ScrollBody>
                <Options>
                  <OptionGroup>
                    <Option><OptionRadio name="mode" defaultChecked />Persistent</Option>
                    <Option><OptionRadio name="mode" />One shot</Option>
                  </OptionGroup>
                  {snaps.map((s) => (
                    <Option key={s} $off={s.startsWith("On ")}>
                      <Check defaultChecked={s === "End"} disabled={s.startsWith("On ")} />
                      {s}
                    </Option>
                  ))}
                </Options>
              </ScrollBody>
              <VTrack><VThumb $size="199px" /></VTrack>
            </ScrollArea>
            <HTrack><HThumb $size="91px" /></HTrack>
          </Sidebar>

          <Center>
            <ViewTabs>
              <ViewIcon aria-label="Four views">
                <svg width="22" height="20" viewBox="0 0 22 20" fill="none" stroke="#555" aria-hidden>
                  <path d="M1.500 1.500h19v17h-19zM11 1.500v17M1.500 10h19" />
                  <path d="M2 2.500h3M12 2.500h3M2 11h3M12 11h3" strokeWidth="2" />
                </svg>
              </ViewIcon>
              <ViewIcon aria-label="Single view">
                <svg width="22" height="20" viewBox="0 0 22 20" fill="none" stroke="#6a90ee" aria-hidden>
                  <path d="M1.500 1.500h19v17h-19z" />
                  <path d="M2 2.500h3" strokeWidth="2" />
                </svg>
              </ViewIcon>
              <TabList>
                {["Perspective", "Top", "Front", "Right"].map((t) => (
                  <Tab key={t} $on={t === "Perspective"}>{t}</Tab>
                ))}
              </TabList>
            </ViewTabs>
            <Viewport>
              <Scene viewBox="131 86 888 600" preserveAspectRatio="xMinYMin slice">
                <Ground />
                <Model />
                <Triad />
              </Scene>
              <ViewLabel>Perspective</ViewLabel>
              <Palette>
                <PaletteTitle>
                  <PaletteClose aria-label="Close palette" />
                  Surface Creation
                </PaletteTitle>
                <PaletteGrid>
                  {surfaceTools.map(([name, art], i) => (
                    <ToolButton key={name} aria-label={name} $active={i === 1}>
                      <SheetIcon x={15 + (i % 6) * 90} y={66 + Math.floor(i / 6) * 90}>{art}</SheetIcon>
                    </ToolButton>
                  ))}
                </PaletteGrid>
              </Palette>
              <Tooltip role="tooltip">Surface from planar curves</Tooltip>
              <Pointer width="12" height="18" viewBox="0 0 12 18" aria-hidden>
                <path d="M1 1v13l3-3 2.500 5.500 2.500-1L6.700 10H11z" fill="#000" stroke="#fff" strokeWidth="1" />
              </Pointer>
            </Viewport>
          </Center>

          <Inspector>
            <PanelIcons>
              {panelIcons.map(([name, art], i) => (
                <PanelIcon key={name} aria-label={name} $on={i === 0}><Line>{art}</Line></PanelIcon>
              ))}
              <PanelIcon aria-label="Help"><Help /></PanelIcon>
            </PanelIcons>
            <LayerTable>
              <colgroup>
                <col width="84" /><col width="23" /><col width="23" /><col width="23" />
                <col width="31" /><col width="23" /><col />
              </colgroup>
              <thead>
                <tr><th>Name</th><th /><th /><th /><th /><th /><th>Linetype</th></tr>
              </thead>
              <tbody>
                {layers.map((l, i) => (
                  <tr key={l.name}>
                    <td>{l.name}</td>
                    <td><Cell><Radio $large name="layer" defaultChecked={i === 0} aria-label={l.name} /></Cell></td>
                    <td><Cell><Bulb dim={i === 0} /></Cell></td>
                    <td><Cell><Lock dim={i === 0} /></Cell></td>
                    <td><Cell><Swatch $color={l.color} /></Cell></td>
                    <td>
                      <Cell>
                        <svg width="12" height="12" viewBox="0 0 12 12" aria-hidden>
                          <circle cx="6" cy="6" r="5.500" fill="url(#material)" />
                        </svg>
                      </Cell>
                    </td>
                    <td>
                      <LineCell>
                        <LineSelect aria-label={`${l.name} linetype`}><option>Conti...</option></LineSelect>
                        <UpDown />
                      </LineCell>
                    </td>
                  </tr>
                ))}
              </tbody>
            </LayerTable>
            <Filler />
            <HTrack><HThumb $size="219px" /></HTrack>
            <PanelFooter>
              <Segments>
                <Segment aria-label="Add layer">
                  <svg width="13" height="13" viewBox="0 0 13 13" stroke="currentColor" aria-hidden><path d="M1 6.500h11M6.500 1v11" /></svg>
                </Segment>
                <Segment aria-label="Remove layer" $dim>
                  <svg width="13" height="13" viewBox="0 0 13 13" stroke="currentColor" aria-hidden><path d="M1 6.500h11" /></svg>
                </Segment>
              </Segments>
              <Segments>
                <Segment aria-label="Layer actions" $wide>
                  <svg width="12" height="12" viewBox="0 0 12 12" fill="none" stroke="currentColor" aria-hidden>
                    <circle cx="6" cy="6" r="2.800" strokeWidth="2" />
                    <path d="M6 1v2M6 9v2M1 6h2M9 6h2M2.500 2.500l1.400 1.400M8.100 8.100l1.400 1.400M9.500 2.500L8.100 3.900M3.900 8.100L2.500 9.500" strokeWidth="1.700" />
                  </svg>
                  <svg width="7" height="5" viewBox="0 0 7 5" fill="none" stroke="currentColor" strokeWidth="1.300" aria-hidden>
                    <path d="M.5 .8l3 3 3-3" />
                  </svg>
                </Segment>
              </Segments>
            </PanelFooter>
          </Inspector>
        </Workspace>

        <StatusBar>
          <svg width="13" height="11" viewBox="0 0 13 11" stroke="#555" aria-hidden>
            <path d="M0 .5h13M0 3.500h13M0 6.500h13M0 9.500h13" />
          </svg>
          <span>Unable to cap one object. The openings did not have closed, planar loops of edges.</span>
          <Coords>
            <PlaneBox>
              <PlaneSelect aria-label="Coordinate system"><option>CPlane</option></PlaneSelect>
              <UpDown color="#8a8a8a" />
            </PlaneBox>
            <Coord>X: 72.199</Coord>
            <Coord>Y: 48.659</Coord>
            <Coord $last>Z: 0.000</Coord>
          </Coords>
        </StatusBar>
      </Window>
    </Screen>
  );
}
